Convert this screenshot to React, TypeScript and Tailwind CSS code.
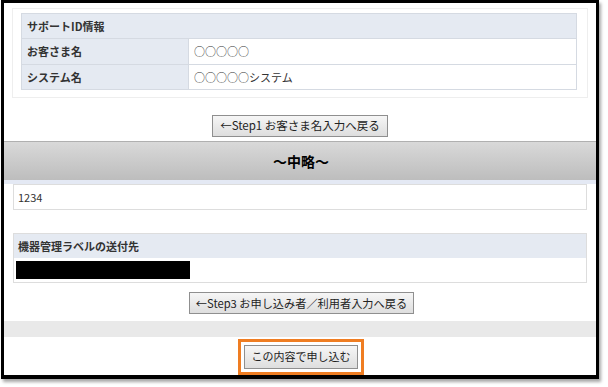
import React from "react";

const font = { fontFamily: '"Noto Sans CJK JP", "Noto Sans", sans-serif' };

function Btn({ children, className = "" }: { children: React.ReactNode; className?: string }) {
  return (
    <div
      className={
        "flex items-center justify-center border border-[#8f8f8f] bg-gradient-to-b from-[#f6f6f6] to-[#dedede] text-[#222] leading-none " +
        className
      }
    >
      {children}
    </div>
  );
}

export default function App() {
  return (
    <div className="w-[608px] h-[387px] bg-white overflow-hidden" style={font}>
      <div className="ml-[1px] w-[598px] h-[379px] border-[3px] border-b-[4px] border-black bg-white shadow-[2px_3px_3px_rgba(0,0,0,0.35)] flex flex-col">
        {/* Support ID section */}
        <div className="mx-[8px] mt-[5px] border border-[#eeeeee] pl-[8px] pr-[10px] pt-[4px] pb-[7px]">
          <div className="border border-[#d5dae2] text-[11px] text-[#333]">
            <div className="h-[25px] bg-[#e5eaf2] flex items-center pl-[5px] font-bold border-b border-[#d5dae2]">
              サポートID情報
            </div>
            <div className="h-[26px] flex border-b border-[#d5dae2]">
              <div className="w-[167px] bg-[#e5eaf2] flex items-center pl-[5px] font-bold border-r border-[#d5dae2]">
                お客さま名
              </div>
              <div className="flex-1 flex items-center pl-[5px]">○○○○○</div>
            </div>
            <div className="h-[24px] flex">
              <div className="w-[167px] bg-[#e5eaf2] flex items-center pl-[5px] font-bold border-r border-[#d5dae2]">
                システム名
              </div>
              <div className="flex-1 flex items-center pl-[5px]">○○○○○システム</div>
            </div>
          </div>
        </div>

        <div className="flex justify-center mt-[17px]">
          <Btn className="w-[176px] h-[22px] text-[11.5px]">←Step1 お客さま名入力へ戻る</Btn>
        </div>

        {/* omitted band */}
        <div className="mt-[4px] h-[40px] bg-gradient-to-b from-[#d9d9d9] to-[#bdbdbd] flex items-center justify-center border-t border-[#b0b0b0]">
          <span className="text-[14px] font-bold text-black ml-[2px]">～中略～</span>
        </div>
        <div className="h-[4px] bg-[#e4e9f4]"></div>

        <div className="mx-[9px] h-[26px] border border-[#dddddd] flex items-center pl-[4px] text-[11px] text-[#333]">
          1234
        </div>

        {/* label destination */}
        <div className="mx-[9px] mt-[23px] h-[51px] border border-[#dddddd] flex flex-col text-[11px] text-[#333]">
          <div className="h-[24px] bg-[#e5eaf2] flex items-center pl-[4px] font-bold">機器管理ラベルの送付先</div>
          <div className="flex-1 flex items-center pl-[2px]">
            <div className="w-[174px] h-[18px] bg-black"></div>
          </div>
        </div>

        <div className="flex justify-center mt-[9px]">
          <Btn className="w-[225px] h-[22px] text-[11.2px] ml-[3px]">←Step3 お申し込み者／利用者入力へ戻る</Btn>
        </div>

        <div className="mt-[7px] h-[16px] bg-[#e9e9e9]"></div>

        <div className="flex-1 flex justify-center items-end">
          <div className="mt-[2px] border-[3px] border-[#ef7d22] p-[3px] ml-[2px]">
            <Btn className="w-[114px] h-[24px] text-[11px]">この内容で申し込む</Btn>
          </div>
        </div>
      </div>
    </div>
  );
}
